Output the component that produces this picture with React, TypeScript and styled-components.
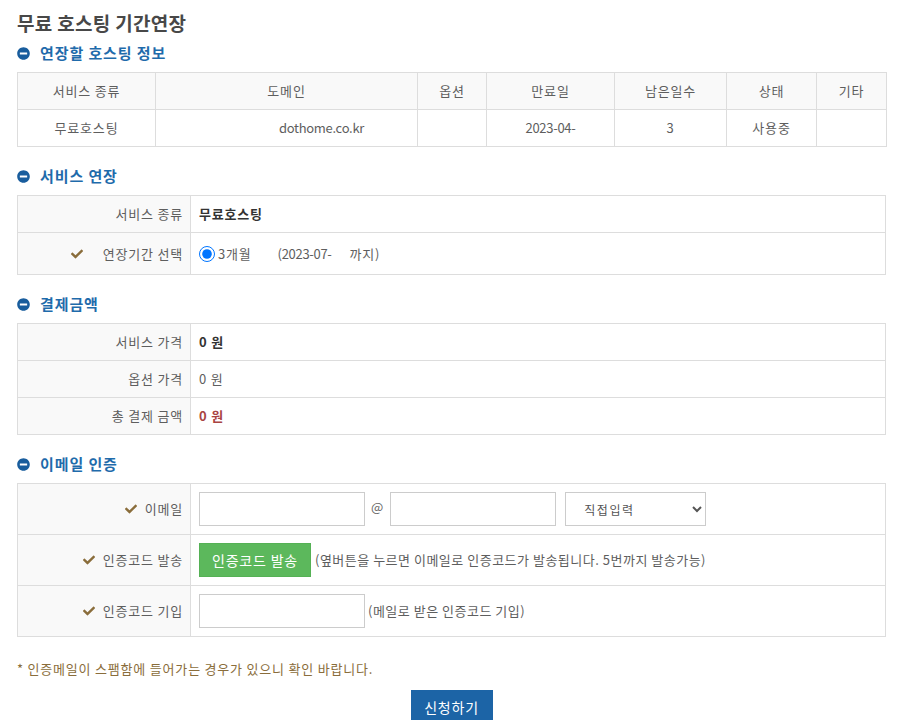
import React from "react";
import styled, { createGlobalStyle } from "styled-components";
import { FaCheck, FaMinusCircle } from "react-icons/fa";

const GlobalStyle = createGlobalStyle`
  html, body { margin: 0; padding: 0; background: #fff; }
  body { font-family: "Noto Sans CJK KR", "Noto Sans", sans-serif; }
  * { box-sizing: border-box; }
`;

const Page = styled.div`
  width: 869px;
  margin-left: 17px;
  padding-top: 8px;
  font-family: "Noto Sans CJK KR", "Noto Sans", sans-serif;
  font-size: 13px;
  letter-spacing: 0.8px;
  color: #5e5e5e;
`;

const Latin = styled.span`
  letter-spacing: -0.3px;
`;

const Title = styled.h1`
  margin: 0;
  font-size: 19px;
  line-height: 30px;
  font-weight: 700;
  letter-spacing: 0.3px;
  color: #484848;
`;

const SectionHeading = styled.h2<{ $first?: boolean }>`
  margin: ${(p) => (p.$first ? "3px" : "17px")} 0 7px;
  display: flex;
  align-items: center;
  gap: 10px;
  font-size: 15px;
  line-height: 24px;
  font-weight: 700;
  letter-spacing: 0.9px;
  color: #1f6bab;
`;

const HeadingIcon = styled(FaMinusCircle)`
  color: #195d9d;
  flex: none;
`;

const Table = styled.table`
  width: 869px;
  border-collapse: collapse;
  table-layout: fixed;
`;

const HeadCell = styled.th`
  border: 1px solid #ddd;
  background: #f9f9f9;
  padding: 8px 8px;
  line-height: 20px;
  font-weight: 400;
  color: #5e5e5e;
  text-align: center;
  white-space: nowrap;
`;

const DataCell = styled.td<{ $shift?: number }>`
  border: 1px solid #ddd;
  padding: 8px 8px 8px ${(p) => 8 + (p.$shift ?? 0)}px;
  line-height: 20px;
  color: #5e5e5e;
  text-align: center;
  white-space: nowrap;
`;

const LabelCell = styled.th`
  border: 1px solid #ddd;
  background: #f9f9f9;
  padding: 8px 7px 8px 8px;
  line-height: 20px;
  font-weight: 400;
  color: #5e5e5e;
  text-align: right;
  white-space: nowrap;
`;

const LabelInner = styled.div<{ $gap: number }>`
  display: flex;
  justify-content: flex-end;
  align-items: center;
  gap: ${(p) => p.$gap}px;
`;

const CheckIcon = styled(FaCheck)`
  color: #8a6d3b;
  flex: none;
`;

const ValueCell = styled.td`
  border: 1px solid #ddd;
  padding: 8px 8px 8px 8px;
  line-height: 20px;
  color: #5e5e5e;
  text-align: left;
  white-space: nowrap;
`;

const ValueRow = styled.div<{ $h?: number }>`
  display: flex;
  align-items: center;
  min-height: ${(p) => p.$h ?? 20}px;
`;

const Strong = styled.span<{ $tone?: "dark" | "red" | "plain" }>`
  font-weight: ${(p) => (p.$tone === "plain" ? 400 : 700)};
  color: ${(p) => (p.$tone === "red" ? "#a94442" : p.$tone === "plain" ? "#5e5e5e" : "#333")};
`;

const Radio = styled.input`
  width: 16px;
  height: 16px;
  margin: 0 3px 0 0;
  accent-color: #0075ff;
`;

const Spaced = styled.span<{ $ml: number }>`
  margin-left: ${(p) => p.$ml}px;
`;

const TextInput = styled.input`
  width: 166px;
  height: 34px;
  border: 1px solid #ccc;
  background: #fff;
  padding: 0 8px;
  font-family: inherit;
  font-size: 13px;
  outline: none;
`;

const At = styled.span`
  margin: 0 7px 0 6px;
  color: #666;
  font-size: 13px;
  letter-spacing: 0;
  position: relative;
  top: -2px;
`;

const Select = styled.select`
  margin-left: 9px;
  width: 141px;
  height: 34px;
  border: 1px solid #ccc;
  background: #fff;
  padding: 0 8px 0 14px;
  font-family: inherit;
  font-size: 12px;
  letter-spacing: 1.5px;
  color: #555;
  outline: none;
`;

const GreenButton = styled.button`
  height: 34px;
  padding: 0 12px;
  border: 1px solid #55b155;
  background: #5cb85c;
  color: #fff;
  font-family: inherit;
  font-size: 14px;
  letter-spacing: 0.8px;
  cursor: pointer;
`;

const Note = styled.span<{ $ml: number }>`
  margin-left: ${(p) => p.$ml}px;
  color: #5e5e5e;
  letter-spacing: 0.5px;
`;

const Footnote = styled.p`
  margin: 22px 0 0;
  line-height: 20px;
  font-size: 13px;
  letter-spacing: 0.8px;
  color: #8a6d3b;
`;

const SubmitWrap = styled.div`
  display: flex;
  justify-content: center;
  margin-top: 11px;
`;

const SubmitButton = styled.button`
  width: 82px;
  height: 34px;
  border: none;
  background: #1c64a6;
  color: #fff;
  font-family: inherit;
  font-size: 14px;
  letter-spacing: 0.8px;
  cursor: pointer;
`;

const infoCols = [138, 262, 69, 128, 112, 90, 70];
const infoHeads = ["서비스 종류", "도메인", "옵션", "만료일", "남은일수", "상태", "기타"];

function Label({ children, check, gap = 8 }: { children: React.ReactNode; check?: boolean; gap?: number }) {
  return (
    <LabelCell>
      <LabelInner $gap={gap}>
        {check && <CheckIcon size={12} />}
        <span>{children}</span>
      </LabelInner>
    </LabelCell>
  );
}

function FormCols() {
  return (
    <colgroup>
      <col style={{ width: 173 }} />
      <col />
    </colgroup>
  );
}

export default function App() {
  return (
    <>
      <GlobalStyle />
      <Page>
        <Title>무료 호스팅 기간연장</Title>

        <SectionHeading $first>
          <HeadingIcon size={13} />
          연장할 호스팅 정보
        </SectionHeading>
        <Table>
          <colgroup>
            {infoCols.map((w, i) => (
              <col key={i} style={{ width: w }} />
            ))}
          </colgroup>
          <thead>
            <tr>
              {infoHeads.map((h) => (
                <HeadCell key={h}>{h}</HeadCell>
              ))}
            </tr>
          </thead>
          <tbody>
            <tr>
              <DataCell>무료호스팅</DataCell>
              <DataCell $shift={70}>
                <Latin>dothome.co.kr</Latin>
              </DataCell>
              <DataCell></DataCell>
              <DataCell $shift={-10}>
                <Latin>2023-04-</Latin>
              </DataCell>
              <DataCell>3</DataCell>
              <DataCell>사용중</DataCell>
              <DataCell></DataCell>
            </tr>
          </tbody>
        </Table>

        <SectionHeading>
          <HeadingIcon size={13} />
          서비스 연장
        </SectionHeading>
        <Table>
          <FormCols />
          <tbody>
            <tr>
              <Label>서비스 종류</Label>
              <ValueCell>
                <Strong $tone="dark">무료호스팅</Strong>
              </ValueCell>
            </tr>
            <tr>
              <Label check gap={20}>
                연장기간 선택
              </Label>
              <ValueCell>
                <ValueRow $h={25}>
                  <Radio type="radio" name="period" checked readOnly />
                  <span>3개월</span>
                  <Spaced $ml={26}>
                    <Latin>(2023-07-</Latin>
                  </Spaced>
                  <Spaced $ml={18}>까지)</Spaced>
                </ValueRow>
              </ValueCell>
            </tr>
          </tbody>
        </Table>

        <SectionHeading>
          <HeadingIcon size={13} />
          결제금액
        </SectionHeading>
        <Table>
          <FormCols />
          <tbody>
            <tr>
              <Label>서비스 가격</Label>
              <ValueCell>
                <Strong $tone="dark">0 원</Strong>
              </ValueCell>
            </tr>
            <tr>
              <Label>옵션 가격</Label>
              <ValueCell>
                <Strong $tone="plain">0 원</Strong>
              </ValueCell>
            </tr>
            <tr>
              <Label>총 결제 금액</Label>
              <ValueCell>
                <Strong $tone="red">0 원</Strong>
              </ValueCell>
            </tr>
          </tbody>
        </Table>

        <SectionHeading>
          <HeadingIcon size={13} />
          이메일 인증
        </SectionHeading>
        <Table>
          <FormCols />
          <tbody>
            <tr>
              <Label check>이메일</Label>
              <ValueCell>
                <ValueRow>
                  <TextInput type="text" />
                  <At>@</At>
                  <TextInput type="text" />
                  <Select defaultValue="direct">
                    <option value="direct">직접입력</option>
                  </Select>
                </ValueRow>
              </ValueCell>
            </tr>
            <tr>
              <Label check>인증코드 발송</Label>
              <ValueCell>
                <ValueRow>
                  <GreenButton type="button">인증코드 발송</GreenButton>
                  <Note $ml={4}>(옆버튼을 누르면 이메일로 인증코드가 발송됩니다. 5번까지 발송가능)</Note>
                </ValueRow>
              </ValueCell>
            </tr>
            <tr>
              <Label check>인증코드 기입</Label>
              <ValueCell>
                <ValueRow>
                  <TextInput type="text" />
                  <Note $ml={3}>(메일로 받은 인증코드 기입)</Note>
                </ValueRow>
              </ValueCell>
            </tr>
          </tbody>
        </Table>

        <Footnote>* 인증메일이 스팸함에 들어가는 경우가 있으니 확인 바랍니다.</Footnote>
        <SubmitWrap>
          <SubmitButton type="button">신청하기</SubmitButton>
        </SubmitWrap>
      </Page>
    </>
  );
}
